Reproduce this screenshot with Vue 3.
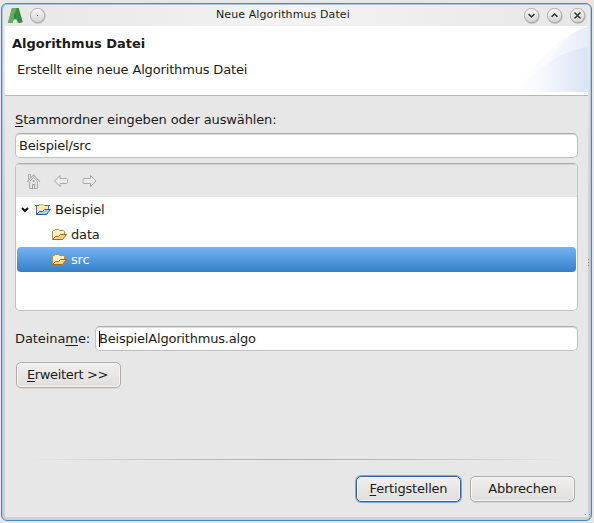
<script setup>
import { ref } from 'vue'

const folder = ref('Beispiel/src')
const filename = ref('BeispielAlgorithmus.algo')
const rows = [
  { name: 'Beispiel', root: true },
  { name: 'data' },
  { name: 'src', selected: true },
]
</script>

<template>
  <div class="desktop">
    <section class="window">
      <header class="titlebar">
        <svg class="app-icon" width="16" height="17" viewBox="0 0 16 17">
          <path d="M11 2l4 13-2 1z" fill="#d8b8b0" />
          <path d="M4 1h6.5l4 14-4.5 1-1.5-3.5H5.5L4.5 16H0z" fill="#3f8f48" />
          <path d="M4 1h4.5L4.5 16H0z" fill="#5fae62" />
          <path d="M8.5 1.5l2-.5 4 14-3.5 1z" fill="#3c8a45" />
          <path d="M6.8 5.5l1.4 5H5.8z" fill="#34763d" />
        </svg>
        <svg class="round menu" width="18" height="18" viewBox="0 0 18 18">
          <defs>
            <linearGradient id="knob" x1="0" y1="0" x2="0" y2="1">
              <stop offset="0" stop-color="#fafafa" /><stop offset="1" stop-color="#d2d2d2" />
            </linearGradient>
          </defs>
          <circle cx="9" cy="9" r="7.7" fill="#c2c2c2" />
          <circle cx="8.5" cy="8.5" r="7.1" fill="url(#knob)" stroke="#a6a6a6" stroke-width=".8" />
          <rect x="8" y="8" width="1" height="1" fill="#444" />
        </svg>
        <h1>Neue Algorithmus Datei</h1>
        <div class="controls">
          <svg v-for="d in ['M5.6 7.2 8.5 10l2.9-2.8', 'M5.6 9.8 8.5 7l2.9 2.8', 'M5.5 5.5l6 6M11.5 5.5l-6 6']" :key="d" width="18" height="18" viewBox="0 0 18 18">
            <circle cx="9" cy="9.1" r="7.7" fill="#b4b4b4" />
            <circle cx="8.5" cy="8.5" r="7.1" fill="url(#knob)" stroke="#a6a6a6" stroke-width=".8" />
            <path :d="d" fill="none" stroke="#fff" stroke-width="1.5" transform="translate(0 1)" />
            <path :d="d" fill="none" stroke="#333" stroke-width="1.6" />
          </svg>
        </div>
      </header>

      <div class="banner">
        <div class="banner-text">
          <h2>Algorithmus Datei</h2>
          <p>Erstellt eine neue Algorithmus Datei</p>
        </div>
        <svg class="swoosh" width="74" height="66" viewBox="0 0 74 66">
          <defs>
            <linearGradient id="s1"><stop offset="0" stop-color="#fff" /><stop offset=".5" stop-color="#fafbfe" /><stop offset="1" stop-color="#f1f5fd" /></linearGradient>
            <linearGradient id="s2"><stop offset="0" stop-color="#fff" /><stop offset=".35" stop-color="#f7f9fd" /><stop offset="1" stop-color="#dbe2f6" /></linearGradient>
            <linearGradient id="s3"><stop offset="0" stop-color="#f8fafe" /><stop offset="1" stop-color="#e5ecfa" /></linearGradient>
          </defs>
          <path d="M0 66C20 38 44 10 74 0v66z" fill="url(#s1)" />
          <path d="M34 38C43 22 54 6 74 1v65H34z" fill="url(#s3)" />
          <path d="M0 66C20 46 44 25 74 21v45z" fill="url(#s2)" />
        </svg>
      </div>

      <main>
        <label class="folder-label"><u>S</u>tammordner eingeben oder auswählen:</label>
        <div class="field"><span>{{ folder }}</span></div>

        <div class="tree">
          <nav class="toolbar">
            <svg width="16" height="17" viewBox="0 0 16 17" fill="none" stroke="#adadad">
              <path d="M4.5 8.500v7h8v-7L8.500 4.500z" fill="#e4e4e4" />
              <path d="M2 8.800 8.500 2.200l6.500 6.600" stroke-width="1.2" />
              <path d="M3.500 6.500v-5h2v3" />
              <path d="M8 7.500h1v1H8zM7.500 15.500v-4h2v4" stroke="#a0a0a0" />
            </svg>
            <svg width="16" height="17" viewBox="0 0 16 17" fill="#ececec" stroke="#a8a8a8">
              <path d="M1.500 8 7 2.500v3h6.500q1 0 1 1v3q0 1-1 1H7v3z" />
            </svg>
            <svg width="16" height="17" viewBox="0 0 16 17" fill="#ececec" stroke="#a8a8a8">
              <path d="M15 8 9.500 2.500v3H3q-1 0-1 1v3q0 1 1 1h6.500v3z" />
            </svg>
          </nav>
          <div v-for="r in rows" :key="r.name" class="row" :class="{ root: r.root, selected: r.selected }">
            <svg v-if="r.root" class="chevron" width="8" height="6" viewBox="0 0 8 6"><path d="M1 1l3 3 3-3" fill="none" stroke="#111" stroke-width="2" /></svg>
            <svg v-if="r.root" class="folder" width="16" height="14" viewBox="0 0 16 14">
              <path d="M1.500 11.500v-9h12v5" fill="#fbe9b4" stroke="#4d69b3" />
              <path d="M4 3l.5-1.500h4L9.500 3" fill="#fae8b5" stroke="#d9b878" />
              <path d="M0 2.500h4M10 2.500h5" stroke="#4668b4" />
              <path d="M1.500 11.500 4.500 8.500h3l2-2h6L11.500 11.500z" fill="#a9d1fb" stroke="#3151ae" />
            </svg>
            <svg v-else class="folder" width="16" height="14" viewBox="0 0 16 14">
              <path d="M1.500 11V3.500l1-1h1l1-1h3l1 1h4l1 1v3" fill="#fdf0c5" stroke="#c58a42" />
              <path d="M1.500 11.500 4.500 8.500h3l2-2h6L11.500 11.500z" fill="#fbd486" stroke="#aa671f" />
            </svg>
            <span>{{ r.name }}</span>
          </div>
        </div>

        <div class="file-row">
          <label>Dateina<u>m</u>e:</label>
          <div class="field"><i class="caret"></i><span>{{ filename }}</span></div>
        </div>
        <button class="advanced"><u>E</u>rweitert &gt;&gt;</button>
        <div class="spacer"></div>
        <hr />
        <footer>
          <button class="primary"><u>F</u>ertigstellen</button>
          <button>Abbrechen</button>
        </footer>
      </main>
      <div class="grip side"><i></i><i></i><i></i></div>
      <div class="grip corner"><i></i><i></i><i></i></div>
    </section>
  </div>
</template>

<style>
body { margin: 0; background: #e7e7e7; overflow: hidden; }
</style>

<style scoped>
* { box-sizing: border-box; }
.desktop {
  height: 523px; padding: 3px 2px 2px 1px; background: #e7e7e7;
  font: 13px/16px "DejaVu Sans", sans-serif; letter-spacing: -.16px; color: #1c1c1c;
}
.window {
  position: relative; height: 518px; display: flex; flex-direction: column;
  border: 1px solid #4b87c2; border-radius: 6px; padding: 1px 3px 3px;
  background: linear-gradient(#ececec, #e4e4e4 80px, #d0d0d0 200px);
  box-shadow: inset 1px 1px 0 #a7c6e9, inset -1px 0 0 #a7c6e9;
}
.titlebar { display: flex; align-items: center; height: 21px; flex: none; background: linear-gradient(90deg, #e7e7e7, #f3f3f3 50%, #e7e7e7); }
.app-icon { margin-left: 3px; }
.menu { margin-left: 5px; }
h1 { margin: 0 0 1px; flex: 1; padding-left: 169px; font-size: 11px; font-weight: 400; letter-spacing: .1px; white-space: nowrap; }
.controls { display: flex; gap: 5px; margin-right: 1px; }
.banner { display: flex; justify-content: space-between; flex: none; height: 70px; background: #fff; border-bottom: 1px solid #b5b9b9; }
.banner-text { padding: 10px 0 0 7px; }
h2 { margin: 0; font-size: 13px; line-height: 16px; letter-spacing: 0; }
.banner p { margin: 10px 0 0 5px; }
main { flex: 1; min-height: 0; background: #e7e7e7; padding: 16px 10px 0; display: flex; flex-direction: column; }
u { text-decoration: underline; text-underline-offset: 2px; text-decoration-thickness: 1px; text-decoration-skip-ink: none; }
.folder-label { display: block; height: 21px; letter-spacing: -.13px; }
.field {
  display: flex; align-items: center; height: 25px; flex: none; padding: 0 3px;
  border: 1px solid #c0c0c0; border-top-color: #adadad; border-radius: 5px; background: #fff;
  box-shadow: inset 0 1px 0 #ddd;
}
.tree {
  display: flex; flex-direction: column; height: 148px; flex: none; margin-top: 5px; overflow: hidden;
  border: 1px solid #c0c0c0; border-top-color: #adadad; border-radius: 5px; background: #fff; padding: 0 1px;
}
.toolbar { display: flex; align-items: center; gap: 12px; height: 33px; flex: none; background: #e7e7e7; padding: 2px 0 0 9px; margin: 0 -1px; box-shadow: inset 0 1px 0 #d2d2d2; }
.row { display: flex; align-items: center; height: 25px; flex: none; padding-left: 34px; }
.row.root { padding-left: 4px; }
.chevron { margin-right: 6px; }
.folder { margin-right: 4px; }
.selected { background: linear-gradient(#75b3f1, #347fc9); border-radius: 4px; color: #fff; }
.file-row { display: flex; align-items: center; margin-top: 15px; }
.file-row label { letter-spacing: -.08px; }
.file-row .field { width: 483px; margin-left: auto; letter-spacing: -.19px; }
.caret { width: 1px; height: 16px; margin-right: -1px; background: #000; }
button {
  width: 105px; height: 26px; padding: 0 0 1px; border: 1px solid #afaba7; border-radius: 5px;
  background: linear-gradient(#f0efee, #e1dfdd); box-shadow: inset 0 0 0 1px #f6f6f5, 0 1px 0 #d9d9d9;
  font: inherit; letter-spacing: -.2px; color: inherit;
}
.advanced { margin: 11px 0 0 1px; padding-right: 2px; flex: none; letter-spacing: -.35px; }
.spacer { flex: 1; }
hr { width: 100%; height: 1px; flex: none; margin: 0; border: 0; background: linear-gradient(90deg, #e7e7e7 2%, #bcbcbc 30%, #b0b0b0 50%, #bcbcbc 70%, #e7e7e7 98%); }
footer { display: flex; justify-content: flex-end; gap: 9px; padding: 16px 3px 15px 0; flex: none; }
.primary { border-color: #34659f; box-shadow: 0 0 0 1px #7cabe2, inset 0 0 0 1px #f6f6f5; }
.grip { position: absolute; }
.grip i { display: block; width: 1px; height: 1px; background: #888; }
.side { right: 2px; top: 255px; display: grid; gap: 2px; }
.corner { right: 1px; bottom: 1px; display: grid; grid-template-columns: 1px 1px; gap: 3px; direction: rtl; }
</style>
